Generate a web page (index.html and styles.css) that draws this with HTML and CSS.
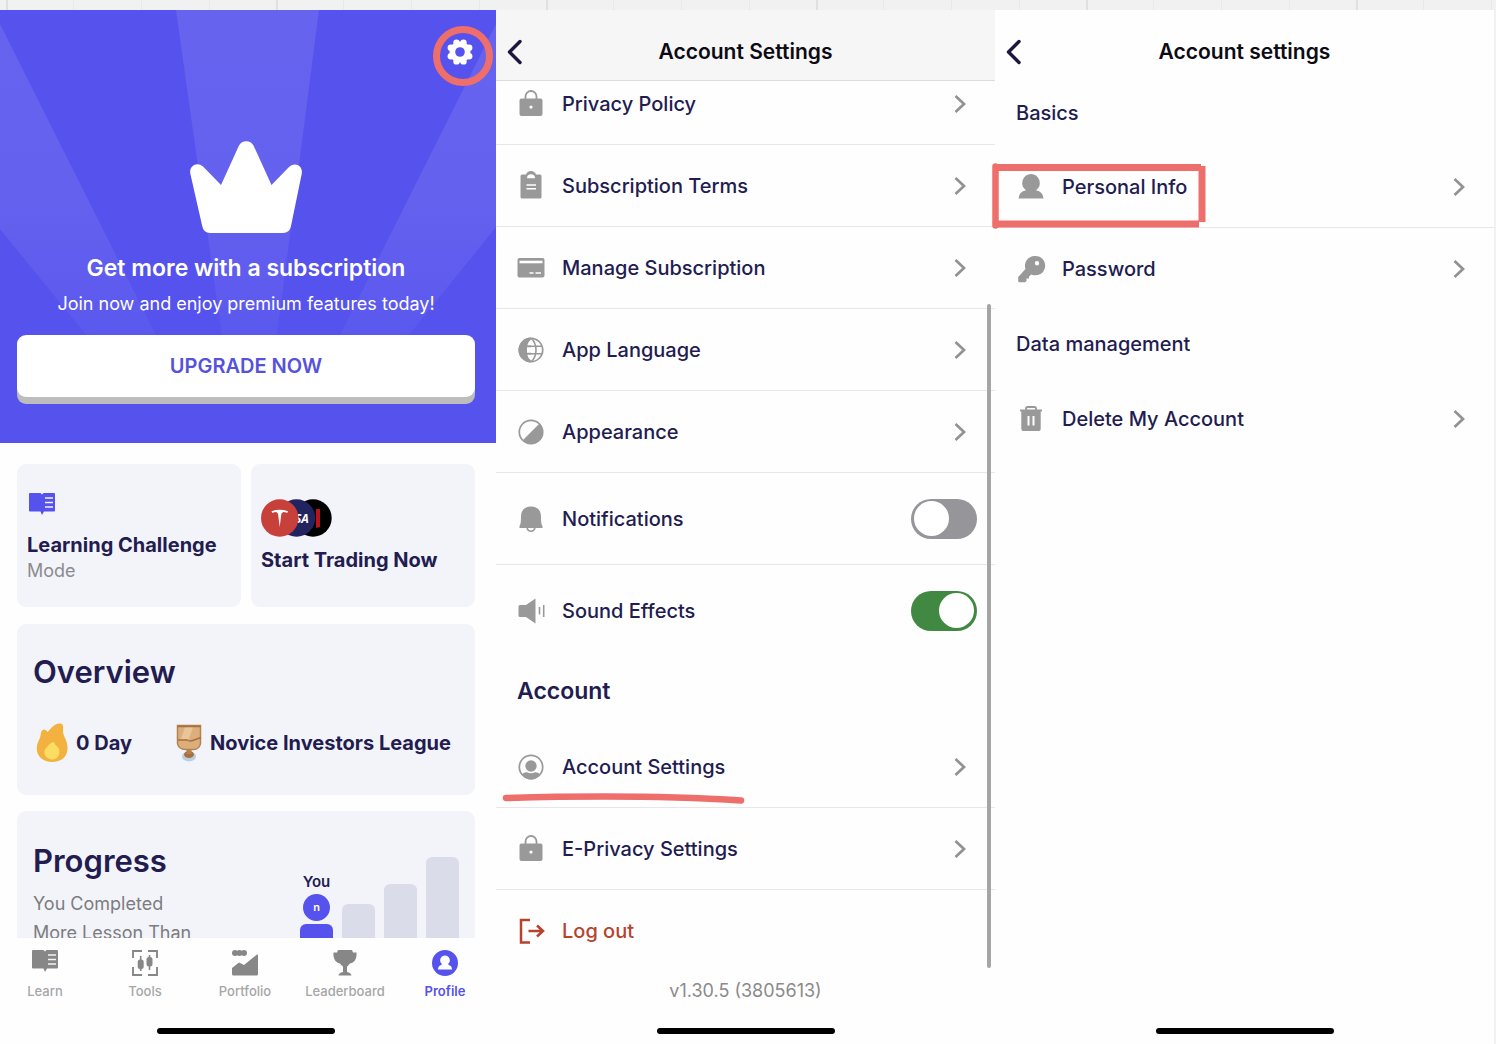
FILE: index.html
```html
<!DOCTYPE html>
<html lang="en">
<head>
<meta charset="utf-8">
<title>Account settings flow</title>
<link rel="stylesheet" href="styles.css">
</head>
<body>
<svg class="sprite" aria-hidden="true">
  <symbol id="chevron" viewBox="0 0 12 20"><path d="M1.500 2 10 10l-8.500 8" fill="none" stroke="currentColor" stroke-width="2.700"/></symbol>
  <symbol id="back" viewBox="0 0 16 26"><path d="M13 2.500 2.500 13 13 23.500" fill="none" stroke="currentColor" stroke-width="3.400" stroke-linecap="round" stroke-linejoin="round"/></symbol>
  <symbol id="lock" viewBox="0 0 28 28"><path d="M8.500 9V6.500a5.500 5.500 0 0 1 11 0V9" fill="none" stroke="currentColor" stroke-width="1.800"/><path fill="currentColor" fill-rule="evenodd" d="M4.500 8.500h19a2 2 0 0 1 2 2v13.500a2 2 0 0 1-2 2h-19a2 2 0 0 1-2-2V10.500a2 2 0 0 1 2-2zM14 15.500a1.600 1.600 0 1 0 0 3.200 1.600 1.600 0 0 0 0-3.200z"/></symbol>
  <symbol id="book" viewBox="0 0 26 22"><path fill="currentColor" d="M1 0h10.500L13 1.500 14.500 0H25a1 1 0 0 1 1 1v16.500a1 1 0 0 1-1 1H15L13 22l-1.500-3.500H1a1 1 0 0 1-1-1V1a1 1 0 0 1 1-1z"/><path class="book-lines" d="M16 5h8M16 9.500h8M16 14h8" fill="none" stroke-width="1.300"/></symbol>
</svg>

<main class="board">
  <section class="screen profile">
    <div class="scroller">
      <header class="hero">
        <svg class="rays" viewBox="0 0 496 433" preserveAspectRatio="none" aria-hidden="true">
          <defs><linearGradient id="ray" x1="0" y1="0" x2="0" y2="433" gradientUnits="userSpaceOnUse"><stop offset="0" stop-color="#6663ef"/><stop offset=".45" stop-color="#6461ef"/><stop offset=".95" stop-color="#5552ed"/></linearGradient></defs>
          <path fill="url(#ray)" d="M176 0h143l-56 433h-26zM0 14l210 419h-36L0 219zM496 14v203L322 433h-36z"/>
        </svg>
        <div class="hero-bar">
          <button class="gear" aria-label="Settings">
            <svg width="26" height="26" viewBox="0 0 26 26"><g fill="#fff"><circle cx="13" cy="13" r="10.500"/><circle cx="9.500" cy="3.600" r="3.200"/><circle cx="16.500" cy="3.600" r="3.200"/><circle cx="9.500" cy="22.400" r="3.200"/><circle cx="16.500" cy="22.400" r="3.200"/><circle cx="3.900" cy="8.800" r="3.300"/><circle cx="3.900" cy="17.200" r="3.300"/><circle cx="22.100" cy="8.800" r="3.300"/><circle cx="22.100" cy="17.200" r="3.300"/></g><circle cx="13" cy="13" r="4.800" fill="#5552ed"/></svg>
            <span class="mark-circle"></span>
          </button>
        </div>
        <svg class="crown" width="112" height="93" viewBox="0 0 112 93" aria-hidden="true"><path fill="#fff" d="M49 5.500a8.200 8.200 0 0 1 14.500 0L81.500 45l17-17.500c6-6.500 15-2 13.200 6.500L101 86q-1.200 7-8 7H20q-6.500 0-7.800-7L.4 34C-1.500 26 7.500 20.500 14 27.500L31 45z"/></svg>
        <h1 class="hero-title">Get more with a subscription</h1>
        <p class="hero-text">Join now and enjoy premium features today!</p>
        <button class="upgrade">UPGRADE NOW</button>
      </header>

      <div class="cards">
        <a class="card tile" href="#challenge">
          <svg class="tile-icon" width="26" height="22"><use href="#book"/></svg>
          <strong>Learning Challenge</strong>
          <span class="tile-note">Mode</span>
        </a>
        <a class="card tile trade" href="#trade">
          <svg width="71" height="38" viewBox="0 0 71 38" aria-hidden="true">
            <circle cx="52" cy="19" r="18.700" fill="#000"/><path d="M55 10h4v18l-4 1z" fill="#b9131d"/>
            <circle cx="35.500" cy="19" r="18.700" fill="#22245f"/>
            <text x="34" y="24" class="visa">SA</text>
            <circle cx="18.700" cy="19" r="18.700" fill="#c8403a"/>
            <path fill="#fff" d="M10.500 12.200q8.200-2.800 16.500 0l-.8 1.800q-2-.8-4.200-.9-.6 1.200-1.600 1.400L18.700 28 17 14.500q-1-.2-1.600-1.400-2.200.1-4.200.9z"/>
          </svg>
          <strong>Start Trading Now</strong>
        </a>
      </div>

      <section class="card overview">
        <h2>Overview</h2>
        <div class="stats">
          <span class="stat">
            <svg width="32" height="40" viewBox="0 0 32 40" aria-hidden="true"><path fill="#f3b23f" d="M26 1c2 1.500.5 7 1.500 10 1 4 4 7 4 14 0 9-6.500 14-15.500 14S.5 33.500.8 25c.2-6.500 3.700-9 4-14 .2-3 2.200-4.800 4-4.300 1.700.4 2 1.800 3 2.300C15 5 20-1 26 1z"/><path fill="#fbdd63" d="M17 19c2-.5 1.500 3 3.500 4 3 2 3.500 5 2.500 8.500S18.500 37 15.500 36.500 9 34 8.500 30s2.500-5.500 3.500-7 3-3.500 5-4z"/></svg>
            0 Day
          </span>
          <span class="stat">
            <svg width="26" height="38" viewBox="0 0 26 38" aria-hidden="true"><ellipse cx="13" cy="32.500" rx="7" ry="5" fill="#b9cfe2"/><ellipse cx="13" cy="30.500" rx="5" ry="3.500" fill="#a8703f"/><path fill="#b5824f" d="M10.500 25h5v5h-5z"/><path fill="#dcae7c" stroke="#b5824f" stroke-width="1.500" d="M1.500 1.500h23v18q-1 6-7 6h-8q-7 0-8-6z"/><path fill="#e9c59a" d="M9 3h8l-4 12H5z"/><path fill="none" stroke="#a8703f" stroke-width="1.400" d="M1.500 2.500h23M2 16h9q3 2 7 0l7-2.500"/></svg>
            Novice Investors League
          </span>
        </div>
      </section>

      <section class="card progress">
        <div>
          <h2>Progress</h2>
          <p>You Completed<br>More Lesson Than</p>
        </div>
        <div class="chart">
          <div class="you"><span>You</span><i class="avatar">n</i><b class="bar bar-you"></b></div>
          <b class="bar bar-1"></b><b class="bar bar-2"></b><b class="bar bar-3"></b>
        </div>
      </section>
    </div>

    <nav class="tabs">
      <a href="#learn"><svg width="26" height="26" viewBox="0 0 26 26"><use href="#book" width="26" height="22"/></svg>Learn</a>
      <a href="#tools"><svg width="26" height="26" viewBox="0 0 26 26"><path fill="none" stroke="currentColor" stroke-width="1.900" d="M1 8V1h9M16 1h9v7M25 17v8h-9M10 25H1v-8"/><path fill="none" stroke="currentColor" stroke-width="1.600" d="M8.700 6v15M17.500 5v15"/><rect x="5.700" y="9.500" width="6" height="9.500" rx="2.500" fill="currentColor"/><rect x="14.500" y="7" width="6" height="9.500" rx="2.500" fill="currentColor"/></svg>Tools</a>
      <a href="#portfolio"><svg width="26" height="26" viewBox="0 0 26 26"><g fill="currentColor"><circle cx="3" cy="3" r="3"/><circle cx="7.500" cy="3" r="3"/><circle cx="12" cy="3" r="3"/><path d="M0 18 7 12.500l5 2.500L25 4.500q1-.5 1 1V24a1.500 1.500 0 0 1-1.500 1.500h-23A1.500 1.500 0 0 1 0 24z"/></g></svg>Portfolio</a>
      <a href="#leaderboard"><svg width="26" height="26" viewBox="0 0 26 26"><path fill="currentColor" d="M6 0h14l1 2.500h3.500q.5 5.500-2 8.500-2 2-4.500 2.500-2 2.500-3 3v5.500q4 .5 4.500 3.500h-13q.5-3 4.500-3.500v-5.500q-1-.5-3-3Q5.500 13 3.500 11 1 8 1.500 2.500H5z"/></svg>Leaderboard</a>
      <a class="active" href="#profile"><svg width="26" height="26" viewBox="0 0 26 26"><circle cx="13" cy="13" r="13" fill="currentColor"/><path fill="#fff" d="M13 5.500a4.800 4.800 0 0 1 3.300 8.300l.2 1.200q3.500.8 3.500 4.500H6q0-3.700 3.500-4.500l.2-1.200A4.800 4.800 0 0 1 13 5.500z"/></svg>Profile</a>
    </nav>
    <div class="home"></div>
  </section>

  <section class="screen settings">
    <header class="topbar lined">
      <button class="back" aria-label="Back"><svg width="16" height="26"><use href="#back"/></svg></button>
      <h1>Account Settings</h1>
    </header>
    <div class="list scrolled">
      <a class="row" href="#privacy"><svg class="icon"><use href="#lock"/></svg><span>Privacy Policy</span><svg class="chevron"><use href="#chevron"/></svg></a>
      <a class="row" href="#terms"><svg class="icon" viewBox="0 0 28 28"><path fill="currentColor" d="M5 2.500h4a5.300 5.300 0 0 1 10 0h4a1.500 1.500 0 0 1 1.500 1.500v21a1.500 1.500 0 0 1-1.500 1.500H5A1.500 1.500 0 0 1 3.500 25V4A1.500 1.500 0 0 1 5 2.500z"/><path fill="#fff" d="M10 6.200a4 4 0 0 1 8 0z"/><path d="M9.500 13h9.500M9.500 16.800h9.500" stroke="#fff" stroke-width="1.500"/></svg><span>Subscription Terms</span><svg class="chevron"><use href="#chevron"/></svg></a>
      <a class="row" href="#manage"><svg class="icon" viewBox="0 0 28 28"><rect x=".5" y="4" width="27" height="19.500" rx="2" fill="currentColor"/><path d="M2.500 8h23" stroke="#fff" stroke-width="2.600"/><path d="M12.500 19h4M18.500 19h5.500" stroke="#fff" stroke-width="1.700"/></svg><span>Manage Subscription</span><svg class="chevron"><use href="#chevron"/></svg></a>
      <a class="row" href="#language"><svg class="icon" viewBox="0 0 28 28"><circle cx="14" cy="14" r="11.700" fill="none" stroke="currentColor" stroke-width="1.700"/><path fill="currentColor" d="M14 1.500v25a12.500 12.500 0 0 1 0-25z"/><path fill="#fff" d="M14 3.500q-3 2.300-3.800 6H14zM10 11.300h4v5.400h-4zM10.200 18.500H14v6q-3-2.300-3.800-6z"/><path fill="none" stroke="currentColor" stroke-width="1.600" d="M14.500 2.500q4.500 4.500 4.500 11.500t-4.500 11.500M10 10.300h15M10 17.700h15"/></svg><span>App Language</span><svg class="chevron"><use href="#chevron"/></svg></a>
      <a class="row" href="#appearance"><svg class="icon" viewBox="0 0 28 28"><circle cx="14" cy="14" r="11.700" fill="none" stroke="currentColor" stroke-width="1.700"/><path fill="currentColor" d="M22.500 5.500a12 12 0 0 1-17 17z"/></svg><span>Appearance</span><svg class="chevron"><use href="#chevron"/></svg></a>
      <label class="row tall"><svg class="icon" viewBox="0 0 28 28"><path fill="currentColor" d="M14 1.500c6.500 0 10 4 10 10 0 6 .5 8 1.500 9.500V23h-23v-2C3.500 19.500 4 17.500 4 11.500c0-6 3.500-10 10-10z"/><path d="M10 23q1 3.300 4 3.300t4-3.300" fill="none" stroke="currentColor" stroke-width="1.500"/></svg><span>Notifications</span><input class="switch" type="checkbox"></label>
      <label class="row tall last"><svg class="icon" viewBox="0 0 28 28"><path fill="currentColor" d="M3 8h6l9.500-6.500v25L9 20H3a1.500 1.500 0 0 1-1.500-1.500v-9A1.500 1.500 0 0 1 3 8z"/><path d="M22.500 10v7.500M26.700 8v12" stroke="currentColor" stroke-width="1.600"/></svg><span>Sound Effects</span><input class="switch" type="checkbox" checked></label>
      <h2 class="group">Account</h2>
      <a class="row" href="#account"><svg class="icon" viewBox="0 0 28 28"><circle cx="14" cy="14" r="11.700" fill="none" stroke="currentColor" stroke-width="1.700"/><circle cx="14" cy="13" r="5.700" fill="currentColor"/><path fill="currentColor" d="M4.500 21.500q3-2.500 5.500-2.200 4 2 8 0 2.500-.3 5.500 2.200-4 5-9.500 5t-9.500-5z"/></svg><span>Account Settings</span><svg class="chevron"><use href="#chevron"/></svg>
        <svg class="mark-line" width="244" height="14" viewBox="0 0 244 14" aria-hidden="true"><path d="M4 6Q140 2 239 8.500" fill="none" stroke="#ee6e6b" stroke-width="6.500" stroke-linecap="round"/></svg></a>
      <a class="row" href="#eprivacy"><svg class="icon"><use href="#lock"/></svg><span>E-Privacy Settings</span><svg class="chevron"><use href="#chevron"/></svg></a>
      <button class="row last logout"><svg class="icon" viewBox="0 0 28 28"><path d="M13 3H4v22.500h9M11.500 14h14M20 8.500l6 5.500-6 5.500" fill="none" stroke="currentColor" stroke-width="2.500"/></svg><span>Log out</span></button>
      <p class="version">v1.30.5 (3805613)</p>
    </div>
    <div class="scrollbar"></div>
    <div class="home"></div>
  </section>

  <section class="screen account">
    <header class="topbar">
      <button class="back" aria-label="Back"><svg width="16" height="26"><use href="#back"/></svg></button>
      <h1>Account settings</h1>
    </header>
    <div class="list">
      <h2 class="label">Basics</h2>
      <a class="row" href="#personal"><svg class="icon" viewBox="0 0 28 28"><path fill="currentColor" d="M14 1a9 9 0 0 1 5 16.300q7 1.200 7.500 8.200h-25q.5-7 7.500-8.200A9 9 0 0 1 14 1z"/></svg><span>Personal Info</span><svg class="chevron"><use href="#chevron"/></svg>
        <svg class="mark-box" width="214" height="67" viewBox="0 0 214 67" aria-hidden="true"><path d="M3.500 4.500H209M210 3v56M207 61H3.500" fill="none" stroke="#ee6e6b" stroke-width="7"/><path d="M3.500 3.500V62.500" stroke="#ee6e6b" stroke-width="6.500" stroke-linecap="round"/></svg></a>
      <a class="row last" href="#password"><svg class="icon" viewBox="0 0 28 28"><path fill="currentColor" fill-rule="evenodd" d="M17.500 1a9.700 9.700 0 1 1-3.200 18.400L12 21.500v2H9.500V26l-1.500 1.300H2.500q-1.300 0-1.300-1.300v-4L8.500 14A9.700 9.700 0 0 1 17.500 1zM20 6a2.200 2.200 0 1 0 0 4.400A2.200 2.200 0 0 0 20 6z"/></svg><span>Password</span><svg class="chevron"><use href="#chevron"/></svg></a>
      <h2 class="label">Data management</h2>
      <a class="row last" href="#delete"><svg class="icon" viewBox="0 0 28 28"><path d="M9 5V3.500Q9 2 10.500 2h7Q19 2 19 3.500V5" fill="none" stroke="currentColor" stroke-width="1.800"/><path fill="currentColor" fill-rule="evenodd" d="M3 4.500h22V6.500h-1.300V24q0 2-2 2H6.300q-2 0-2-2V6.500H3zM10.500 11v9.500h2V11zm5 0v9.500h2V11z"/></svg><span>Delete My Account</span><svg class="chevron"><use href="#chevron"/></svg></a>
    </div>
    <div class="home"></div>
  </section>
</main>
</body>
</html>
```
FILE: styles.css
```css
* { box-sizing: border-box; }
body {
  margin: 0;
  font-family: Inter, "Liberation Sans", sans-serif;
  color: #221c50;
  background: #f1f1f1;
}
h1, h2, p { margin: 0; }
a { color: inherit; text-decoration: none; }
button { border: 0; padding: 0; background: none; font: inherit; cursor: pointer; }
.sprite { display: none; }

.board {
  display: grid;
  grid-template-columns: 496fr 499fr 499fr;
  height: 100vh;
  min-height: 700px;
  padding: 10px 2px 0 0;
  background:
    linear-gradient(90deg, #e0e0e0 2px, transparent 2px 67px, #e9e9e9 67px 68px, transparent 68px 135px, #e9e9e9 135px 136px, transparent 136px 203px, #e9e9e9 203px 204px, transparent 204px) 6px 0 / 270px 10px repeat-x,
    #f1f1f1;
}
.screen {
  position: relative;
  display: flex;
  flex-direction: column;
  min-width: 0;
  min-height: 0;
  background: #fefefe;
}
.home {
  flex: none;
  width: 178px;
  height: 6px;
  margin: auto auto 10px;
  border-radius: 3px;
  background: #000;
}

/* Profile */
.scroller { flex: 1; min-height: 0; overflow: hidden; }
.hero {
  position: relative;
  display: flex;
  flex-direction: column;
  align-items: center;
  height: 433px;
  padding: 0 21px 0 17px;
  color: #fff;
  background: #5552ed;
}
.rays { position: absolute; inset: 0; width: 100%; height: 100%; }
.hero > :not(.rays) { position: relative; }
.hero-bar { display: flex; justify-content: flex-end; width: 100%; height: 130px; padding: 29px 2px 0 0; }
.gear { position: relative; width: 26px; height: 26px; }
.gear svg { display: block; }
.mark-circle {
  position: absolute;
  top: -13px;
  left: -14px;
  width: 60px;
  height: 60px;
  border: 7px solid #ee6e6b;
  border-radius: 50%;
}
.crown { flex: none; overflow: visible; }
.hero-title { margin-top: 19px; font-size: 23px; line-height: 32px; font-weight: 600; white-space: nowrap; }
.hero-text { margin-top: 8px; font-size: 18px; line-height: 24px; white-space: nowrap; }
.upgrade {
  width: 100%;
  height: 62px;
  margin-top: 19px;
  border-radius: 9px;
  background: #fff;
  box-shadow: 0 7px 0 #bdbdbd;
  color: #5552dc;
  font-size: 20px;
  font-weight: 600;
}
.cards { display: grid; grid-template-columns: 1fr 1fr; gap: 10px; margin: 21px 21px 0 17px; }
.card { border-radius: 9px; background: #f3f4f9; }
.tile { display: flex; flex-direction: column; height: 143px; padding: 29px 10px 0; }
.tile strong { font-size: 20px; line-height: 26px; font-weight: 700; white-space: nowrap; }
.tile-icon { flex: none; margin: 0 0 17px 2px; color: #5552ed; }
.tile-note { color: #8b8b90; font-size: 18px; line-height: 26px; }
.trade { padding-top: 35px; }
.trade svg { flex: none; margin-bottom: 10px; }
.visa { fill: #fff; font: italic 700 12px "Open Sans", sans-serif; }
.book-lines { stroke: #f3f4f9; }

.overview { height: 171px; margin: 17px 21px 0 17px; padding: 28px 16px 0; }
.overview h2, .progress h2 { font-size: 31px; line-height: 40px; font-weight: 600; }
.stats { display: flex; gap: 44px; margin-top: 31px; padding-left: 3px; }
.stat { display: flex; align-items: center; gap: 8px; font-size: 20px; line-height: 40px; font-weight: 700; white-space: nowrap; }
.progress { display: flex; justify-content: space-between; height: 190px; margin: 16px 21px 0 17px; padding: 30px 16px 0; }
.progress p { margin-top: 8px; color: #7c7c80; font-size: 18px; line-height: 29px; white-space: nowrap; }
.chart { display: flex; align-items: flex-end; gap: 9px; height: 160px; }
.bar { width: 33px; border-radius: 6px 6px 0 0; background: #dbdce9; }
.bar-1 { height: 97px; }
.bar-2 { height: 117px; }
.bar-3 { height: 144px; }
.you { display: flex; flex-direction: column; align-items: center; font-size: 15px; line-height: 20px; font-weight: 600; }
.avatar {
  width: 27px;
  height: 27px;
  margin: 2px 0 3px;
  border-radius: 50%;
  background: #5552ed;
  color: #fff;
  font-size: 11px;
  line-height: 27px;
  font-style: normal;
  text-align: center;
}
.bar-you { height: 77px; background: #5552ed; }

.tabs { display: grid; grid-template-columns: repeat(5, 1fr); flex: none; height: 80px; margin: 0 1px 0 -5px; padding-top: 12px; }
.tabs a {
  display: flex;
  flex-direction: column;
  align-items: center;
  gap: 7px;
  color: #a6a6a6;
  font-size: 13px;
  line-height: 16px;
  font-weight: 500;
}
.tabs svg { color: #878787; }
.tabs .active, .tabs .active svg { color: #5552ed; }
.tabs .active { font-weight: 600; }
.profile .home { margin: 10px auto 10px 157px; }

/* Settings screens */
.topbar {
  display: grid;
  grid-template-columns: 40px 1fr 40px;
  align-items: center;
  flex: none;
  height: 71px;
  padding-top: 14px;
  border-bottom: 1px solid transparent;
}
.lined { border-color: #dcdcdc; background: #f6f6f6; }
.topbar h1 { color: #0c0b14; font-size: 21px; line-height: 28px; font-weight: 600; text-align: center; }
.back { display: flex; padding-left: 11px; color: #1c173f; }
.list { flex: none; min-height: 0; }
.scrolled { flex: 0 1 auto; overflow: hidden; }
.scrolled .row:first-child { margin-top: -18px; }
.row {
  position: relative;
  display: flex;
  align-items: center;
  width: 100%;
  height: 82px;
  padding: 0 18px 0 21px;
  border-bottom: 1px solid #e7e7e8;
  font-size: 20px;
  line-height: 28px;
  font-weight: 500;
  text-align: left;
}
.account .row { padding-left: 22px; }
.row span { flex: 1; margin-left: 17px; }
.row.tall { height: 92px; }
.row.last { border-bottom-color: transparent; }
.icon { flex: none; width: 28px; height: 28px; color: #999; overflow: visible; }
.chevron { flex: none; width: 12px; height: 20px; margin-right: 11px; color: #929292; }
.switch {
  appearance: none;
  display: flex;
  align-items: center;
  width: 66px;
  height: 40px;
  margin: 0;
  padding: 0 3px;
  border-radius: 20px;
  background: #95959a;
}
.switch::before { content: ""; width: 35px; height: 35px; border-radius: 50%; background: #fff; }
.switch:checked { justify-content: flex-end; background: #418943; }
.group { height: 69px; padding-left: 21px; font-size: 23px; line-height: 68px; font-weight: 600; }
.label { height: 68px; padding-left: 21px; font-size: 20px; line-height: 68px; font-weight: 500; }
.label:first-child { height: 65px; line-height: 65px; }
.logout, .logout .icon { color: #b5432e; }
.version { padding-top: 5px; color: #8a8a8a; font-size: 18px; line-height: 28px; text-align: center; }
.scrollbar {
  position: absolute;
  top: 294px;
  right: 4px;
  bottom: 76px;
  width: 4px;
  border-radius: 2px;
  background: #a5a5a5;
}
.mark-line { position: absolute; left: 6px; bottom: 1px; }
.mark-box { position: absolute; left: -3px; top: 17px; }
```
